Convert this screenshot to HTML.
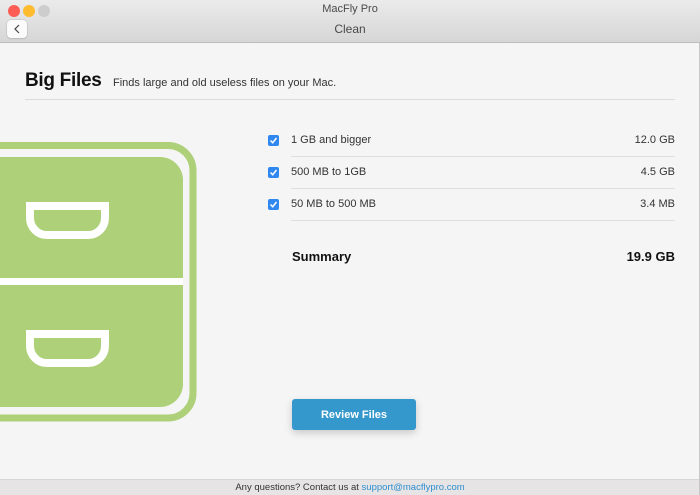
<!DOCTYPE html>
<html><head><meta charset="utf-8"><style>
*{margin:0;padding:0;box-sizing:border-box}
body{width:700px;height:495px;overflow:hidden;background:#f5f5f5;font-family:"Liberation Sans",sans-serif;position:relative}
.tb{position:absolute;left:0;top:0;width:700px;height:43px;background:linear-gradient(#ebebeb,#d6d6d6);border-bottom:1px solid #bdbdbd}
.dot{position:absolute;top:5px;width:12px;height:12px;border-radius:50%}
.t1{position:absolute;top:3px;width:700px;text-align:center;font-size:11px;color:#4a4a4a}
.t2{position:absolute;top:22px;width:700px;text-align:center;font-size:12px;color:#4a4a4a}
.back{position:absolute;left:7px;top:20px;width:20px;height:18px;background:#fbfbfb;border-radius:4px;box-shadow:0 0 0 .5px #bbb,0 1px 1px rgba(0,0,0,.15)}
h1{position:absolute;left:25px;top:70px;font-size:19px;font-weight:bold;color:#111;letter-spacing:-.3px}
.sub{position:absolute;left:113px;top:77px;font-size:11px;color:#333}
.hr{position:absolute;left:25px;top:99px;width:650px;height:1px;background:#dcdcdc}
.row{position:absolute;left:268px;width:407px;height:32px;font-size:11px;color:#333}
.row .cb{position:absolute;left:0;top:10px;width:11px;height:11px;background:#2f88f0;border-radius:2px}
.row .l{position:absolute;left:23px;top:9px}
.row .r{position:absolute;right:0;top:9px}
.row .ln{position:absolute;left:23px;right:0;bottom:0;height:1px;background:#dedede}
.sum{position:absolute;left:292px;top:249px;font-size:13px;font-weight:bold;color:#111}
.sumv{position:absolute;right:25px;top:249px;font-size:13px;font-weight:bold;color:#111}
.btn{position:absolute;left:292px;top:399px;width:124px;height:31px;background:#3598cd;border-radius:3px;color:#fff;font-size:11px;font-weight:bold;text-align:center;line-height:33px;box-shadow:0 3px 8px rgba(0,0,0,.18)}
.foot{position:absolute;left:0;top:479px;width:700px;height:16px;background:#e6e4e5;border-top:1px solid #d6d6d6;font-size:9.5px;color:#333;text-align:center;line-height:15px}
.foot span{color:#2e8fd0}
</style></head><body>
<div class="tb">
<div class="dot" style="left:8px;background:#fd5c55"></div>
<div class="dot" style="left:23px;background:#fdbc2e"></div>
<div class="dot" style="left:38px;background:#cdcdcd"></div>
<div class="t1">MacFly Pro</div>
<div class="t2">Clean</div>
<div class="back"><svg width="20" height="18"><path d="M12 5 L8 9 L12 13" fill="none" stroke="#444" stroke-width="1.2"/></svg></div>
</div>
<h1>Big Files</h1>
<div class="sub">Finds large and old useless files on your Mac.</div>
<div class="hr"></div>
<svg style="position:absolute;left:0;top:140px" width="200" height="284">
<path d="M-10 5.5 H168 A25 25 0 0 1 193 30.5 V253 A25 25 0 0 1 168 278 H-10" fill="none" stroke="#add079" stroke-width="7"/>
<path d="M-10 17 H160 A23 23 0 0 1 183 40 V244 A23 23 0 0 1 160 267 H-10 Z" fill="#add079"/>
<rect x="0" y="138" width="183" height="7" fill="#fff"/>
<path d="M30 66 H105 V78 A17 17 0 0 1 88 95 H47 A17 17 0 0 1 30 78 Z" fill="none" stroke="#fff" stroke-width="8"/>
<path d="M30 194 H105 V206 A17 17 0 0 1 88 223 H47 A17 17 0 0 1 30 206 Z" fill="none" stroke="#fff" stroke-width="8"/>
</svg>
<div class="row" style="top:125px"><div class="cb"><svg width="11" height="11"><path d="M2.5 5.5 L4.7 7.7 L8.5 3" fill="none" stroke="#fff" stroke-width="1.5"/></svg></div><div class="l">1 GB and bigger</div><div class="r">12.0 GB</div><div class="ln"></div></div>
<div class="row" style="top:157px"><div class="cb"><svg width="11" height="11"><path d="M2.5 5.5 L4.7 7.7 L8.5 3" fill="none" stroke="#fff" stroke-width="1.5"/></svg></div><div class="l">500 MB to 1GB</div><div class="r">4.5 GB</div><div class="ln"></div></div>
<div class="row" style="top:189px"><div class="cb"><svg width="11" height="11"><path d="M2.5 5.5 L4.7 7.7 L8.5 3" fill="none" stroke="#fff" stroke-width="1.5"/></svg></div><div class="l">50 MB to 500 MB</div><div class="r">3.4 MB</div><div class="ln"></div></div>
<div class="sum">Summary</div>
<div class="sumv">19.9 GB</div>
<div class="btn">Review Files</div>
<div class="foot">Any questions? Contact us at <span>support@macflypro.com</span></div>
<div style="position:absolute;right:0;top:43px;width:1px;height:452px;background:#c8c8c8"></div>
</body></html>
